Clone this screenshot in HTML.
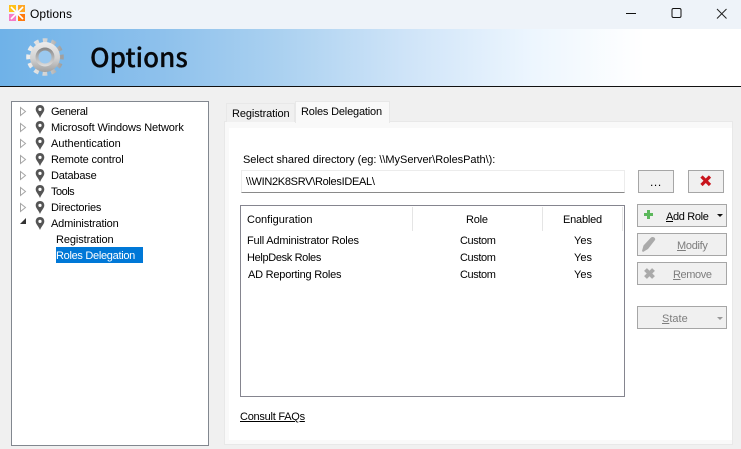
<!DOCTYPE html>
<html><head><meta charset="utf-8"><style>
html,body{margin:0;padding:0}
body{width:741px;height:449px;overflow:hidden;position:relative;background:#f0f0f0;font-family:"Liberation Sans",sans-serif;font-size:11px;color:#000}
div{position:absolute;box-sizing:border-box}
.t{white-space:nowrap;line-height:16px;height:16px;margin-top:1px}
.btn{background:#f0f0f0;border:1px solid #a6a6a6}
.dis{color:#7d7d7d}
u{text-underline-offset:1px}
svg{position:absolute;overflow:visible}
</style></head><body>
<div style="left:0;top:0;width:741px;height:29px;background:#eef3f9"></div>
<svg style="left:9px;top:5px" width="16" height="16" viewBox="0 0 16 16">
<rect x="0" y="0" width="7" height="7" fill="#ffc21a"/><rect x="9" y="0" width="7" height="7" fill="#ffa726"/><rect x="0" y="9" width="7" height="7" fill="#f77bc8"/><rect x="9" y="9" width="7" height="7" fill="#ff7a10"/>
<path d="M2 2L14 14M14 2L2 14" stroke="#fff" stroke-width="1.6"/></svg>
<div class="t" style="left:30px;top:5px;font-size:12px;letter-spacing:.1px">Options</div>
<svg style="left:626px;top:8px" width="110" height="12">
<path d="M0 5.500H10" stroke="#111" stroke-width="1"/><rect x="46" y="0.500" width="9" height="9" rx="1.500" fill="none" stroke="#111"/><path d="M91 1L100.500 10.500M100.500 1L91 10.500" stroke="#222" stroke-width="1"/></svg>
<div style="left:0;top:29px;width:741px;height:57px;background:linear-gradient(90deg,#6fb2e8 0%,#8ec1ec 22%,#a9d0f0 37%,#cfe4f8 55%,#edf6fe 72%,#fff 87%)"></div>
<div style="left:0;top:86px;width:741px;height:1px;background:#111"></div>
<svg style="left:25px;top:37px" width="40" height="40" viewBox="0 0 40 40">
<defs><linearGradient id="g" x1="0" y1="0" x2="0" y2="1"><stop offset="0" stop-color="#ececec"/><stop offset=".55" stop-color="#d2d2d2"/><stop offset="1" stop-color="#a0a0a0"/></linearGradient>
<linearGradient id="h" x1="0" y1="0" x2="0" y2="1"><stop offset="0" stop-color="#858585"/><stop offset="1" stop-color="#e0e0e0"/></linearGradient></defs>
<circle cx="20" cy="20" r="16.300" fill="none" stroke="url(#g)" stroke-width="5" stroke-dasharray="4.600 3.935" stroke-dashoffset="2.300" transform="rotate(-90 20 20)"/>
<circle cx="20" cy="20" r="15" fill="url(#g)"/><circle cx="20" cy="20" r="9.500" fill="url(#h)"/><circle cx="20" cy="20" r="6.500" fill="#9ac8ef"/></svg>
<div class="t" style="left:90px;top:38px;height:36px;line-height:36px;font-family:'Noto Sans CJK SC','Liberation Sans',sans-serif;font-size:26px;font-weight:500;-webkit-text-stroke:.2px #06080c;color:#06080c">Options</div>

<div style="left:11px;top:101px;width:198px;height:345px;background:#fff;border:1px solid #82878f"></div>
<svg style="left:19px;top:105px" width="40" height="128">
<g fill="#fff" stroke="#a5a5a5"><path d="M1.500 2.500L6.500 6.500L1.500 10.500Z"/><path d="M1.500 18.500L6.500 22.500L1.500 26.500Z"/><path d="M1.500 34.500L6.500 38.500L1.500 42.500Z"/><path d="M1.500 50.500L6.500 54.500L1.500 58.500Z"/><path d="M1.500 66.500L6.500 70.500L1.500 74.500Z"/><path d="M1.500 82.500L6.500 86.500L1.500 90.500Z"/><path d="M1.500 98.500L6.500 102.500L1.500 106.500Z"/></g>
<path d="M1 119H7V113Z" fill="#333"/>
<defs><g id="p"><path fill-rule="evenodd" d="M21 0C18.200 0 16.700 2 16.700 4.400C16.700 7.200 19.500 9 21 13C22.500 9 25.300 7.200 25.300 4.400C25.300 2 23.800 0 21 0ZM21 2.800A1.600 1.600 0 1 1 21 6A1.600 1.600 0 1 1 21 2.800Z" fill="#555"/></g></defs>
<use href="#p"/><use href="#p" y="16"/><use href="#p" y="32"/><use href="#p" y="48"/><use href="#p" y="64"/><use href="#p" y="80"/><use href="#p" y="96"/><use href="#p" y="112"/></svg>
<div class="t" style="left:51px;top:103px;letter-spacing:-.37px">General</div>
<div class="t" style="left:51px;top:119px;letter-spacing:-.12px">Microsoft Windows Network</div>
<div class="t" style="left:51px;top:135px">Authentication</div>
<div class="t" style="left:51px;top:151px;letter-spacing:-.15px">Remote control</div>
<div class="t" style="left:51px;top:167px;letter-spacing:-.2px">Database</div>
<div class="t" style="left:51px;top:183px;letter-spacing:-.5px">Tools</div>
<div class="t" style="left:51px;top:199px;letter-spacing:-.22px">Directories</div>
<div class="t" style="left:51px;top:215px;letter-spacing:-.15px">Administration</div>
<div class="t" style="left:56px;top:231px;letter-spacing:-.1px">Registration</div>
<div style="left:56px;top:247px;width:87px;height:16px;background:#0078d7"></div>
<div class="t" style="left:56px;top:247px;color:#fff;letter-spacing:-.3px">Roles Delegation</div>

<div style="left:224px;top:121px;width:509px;height:324px;background:#f9f9f9;border:1px solid #e8e8e8"></div>
<div style="left:229px;top:128px;width:503px;height:312px;background:#fff"></div>
<div style="left:226px;top:103px;width:69px;height:19px;background:#f0f0f0;border:1px solid #e8e8e8;border-bottom:0"></div>
<div class="t" style="left:232px;top:105px;letter-spacing:-.1px">Registration</div>
<div style="left:295px;top:101px;width:95px;height:22px;background:#f9f9f9;border:1px solid #e8e8e8;border-bottom:0"></div>
<div class="t" style="left:301px;top:103px;letter-spacing:-.18px">Roles Delegation</div>

<div class="t" style="left:243px;top:151px;letter-spacing:-.04px">Select shared directory (eg: \\MyServer\RolesPath\):</div>
<div style="left:241px;top:170px;width:384px;height:23px;background:#fff;border:1px solid #ececec;border-bottom:1px solid #8a8a8a"></div>
<div class="t" style="left:246px;top:173px;letter-spacing:-.3px">\\WIN2K8SRV\RolesIDEAL\</div>

<div class="btn" style="left:638px;top:170px;width:36px;height:23px"></div>
<div class="t" style="left:650px;top:173px;font-size:12px;letter-spacing:.6px">...</div>
<div class="btn" style="left:688px;top:170px;width:36px;height:23px"></div>
<svg style="left:700px;top:175px" width="12" height="12"><path d="M1.500 1.500L10 10M10 1.500L1.500 10" stroke="#c8141c" stroke-width="3.200"/></svg>

<div style="left:240px;top:205px;width:385px;height:192px;background:#fff;border:1px solid #85858f"></div>
<div style="left:412px;top:207px;width:1px;height:24px;background:#e5e5e5"></div>
<div style="left:542px;top:207px;width:1px;height:24px;background:#e5e5e5"></div>
<div style="left:622px;top:207px;width:1px;height:24px;background:#e5e5e5"></div>
<div class="t" style="left:247px;top:211px">Configuration</div>
<div class="t" style="left:466px;top:211px;letter-spacing:-.2px">Role</div>
<div class="t" style="left:563px;top:211px;letter-spacing:-.2px">Enabled</div>
<div class="t" style="left:247px;top:232px;letter-spacing:-.18px">Full Administrator Roles</div>
<div class="t" style="left:247px;top:249px;letter-spacing:-.35px">HelpDesk Roles</div>
<div class="t" style="left:248px;top:266px;letter-spacing:-.22px">AD Reporting Roles</div>
<div class="t" style="left:460px;top:232px;letter-spacing:-.4px">Custom</div>
<div class="t" style="left:460px;top:249px;letter-spacing:-.4px">Custom</div>
<div class="t" style="left:460px;top:266px;letter-spacing:-.4px">Custom</div>
<div class="t" style="left:574px;top:232px">Yes</div>
<div class="t" style="left:574px;top:249px">Yes</div>
<div class="t" style="left:574px;top:266px">Yes</div>

<div class="btn" style="left:637px;top:204px;width:90px;height:23px"></div>
<svg style="left:643px;top:209px" width="12" height="12"><path d="M5.500 1V10M1 5.500H10" stroke="#5cb85c" stroke-width="3"/></svg>
<div class="t" style="left:666px;top:208px;letter-spacing:-.35px"><u>A</u>dd Role</div>
<svg style="left:717px;top:214px" width="8" height="4"><path d="M0 0H6L3 3Z" fill="#111"/></svg>
<div class="btn" style="left:637px;top:233px;width:90px;height:23px"></div>
<svg style="left:641px;top:236px" width="16" height="18"><path d="M1 15L2.500 9.500L10 1.500C12 0 15 2 14 4L7 13L2 16Z" fill="#aaa"/></svg>
<div class="t dis" style="left:677px;top:237px;letter-spacing:-.3px"><u>M</u>odify</div>
<div class="btn" style="left:637px;top:262px;width:90px;height:23px"></div>
<svg style="left:644px;top:268px" width="12" height="12"><path d="M1.500 1.500L9.500 9.500M9.500 1.500L1.500 9.500" stroke="#aaa" stroke-width="4"/></svg>
<div class="t dis" style="left:673px;top:266px;letter-spacing:-.4px"><u>R</u>emove</div>
<div class="btn" style="left:637px;top:306px;width:90px;height:23px"></div>
<div class="t dis" style="left:662px;top:310px"><u>S</u>tate</div>
<svg style="left:717px;top:317px" width="8" height="4"><path d="M0 0H6L3 3Z" fill="#999"/></svg>

<div class="t" style="left:240px;top:408px;letter-spacing:-.25px"><u>Consult FAQs</u></div>
</body></html>
